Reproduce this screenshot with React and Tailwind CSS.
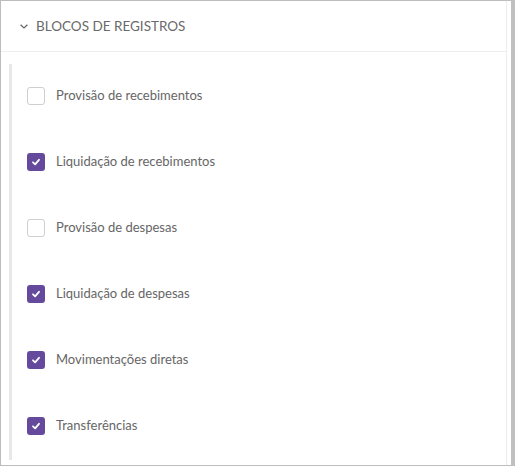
import React from "react";

const items = [
  { label: "Provisão de recebimentos", checked: false },
  { label: "Liquidação de recebimentos", checked: true },
  { label: "Provisão de despesas", checked: false },
  { label: "Liquidação de despesas", checked: true },
  { label: "Movimentações diretas", checked: true },
  { label: "Transferências", checked: true },
];

function Box({ checked }) {
  if (checked) {
    return (
      <div className="w-[18px] h-[18px] rounded-[3px] bg-[#64499c] flex items-center justify-center shrink-0">
        <svg width="10" height="10" viewBox="0 0 10 10" fill="none">
          <path d="M2 5.3 L4.1 7.3 L8 2.8" stroke="white" strokeWidth="1.8" strokeLinecap="round" strokeLinejoin="round" />
        </svg>
      </div>
    );
  }
  return <div className="w-[18px] h-[18px] rounded-[3px] border border-[#cfcfcf] bg-white shrink-0" />;
}

export default function App() {
  return (
    <div
      className="w-[515px] h-[466px] bg-white border-l border-t border-b border-[#bdbdbd] flex"
      style={{ fontFamily: "Lato, 'Noto Sans', sans-serif" }}
    >
      <div className="w-[506px] h-full border-r border-[#ececf2] flex flex-col">
        <div className="h-[51px] border-b border-[#eeeeee] flex items-center pl-[19px] shrink-0">
          <svg width="8" height="5" viewBox="0 0 8 5" fill="none" className="mr-[8px] mt-[1px]">
            <path d="M0.6 0.7 L4 4 L7.4 0.7" stroke="#666" strokeWidth="1.2" />
          </svg>
          <span className="text-[13.5px] text-[#6a6a6a]">BLOCOS DE REGISTROS</span>
        </div>
        <div className="pl-[8px] pt-[12px]">
          <div className="border-l-[3px] border-[#e8e8e8] h-[396px] flex flex-col">
            {items.map((it) => (
              <div key={it.label} className="h-[66px] pb-[2px] flex items-center pl-[15px] gap-[11px]">
                <Box checked={it.checked} />
                <span className="text-[13px] text-[#666666]">{it.label}</span>
              </div>
            ))}
          </div>
        </div>
      </div>
      <div className="w-[4px] h-full" />
      <div className="w-[4px] h-full bg-[#c0c0c0]" />
    </div>
  );
}
